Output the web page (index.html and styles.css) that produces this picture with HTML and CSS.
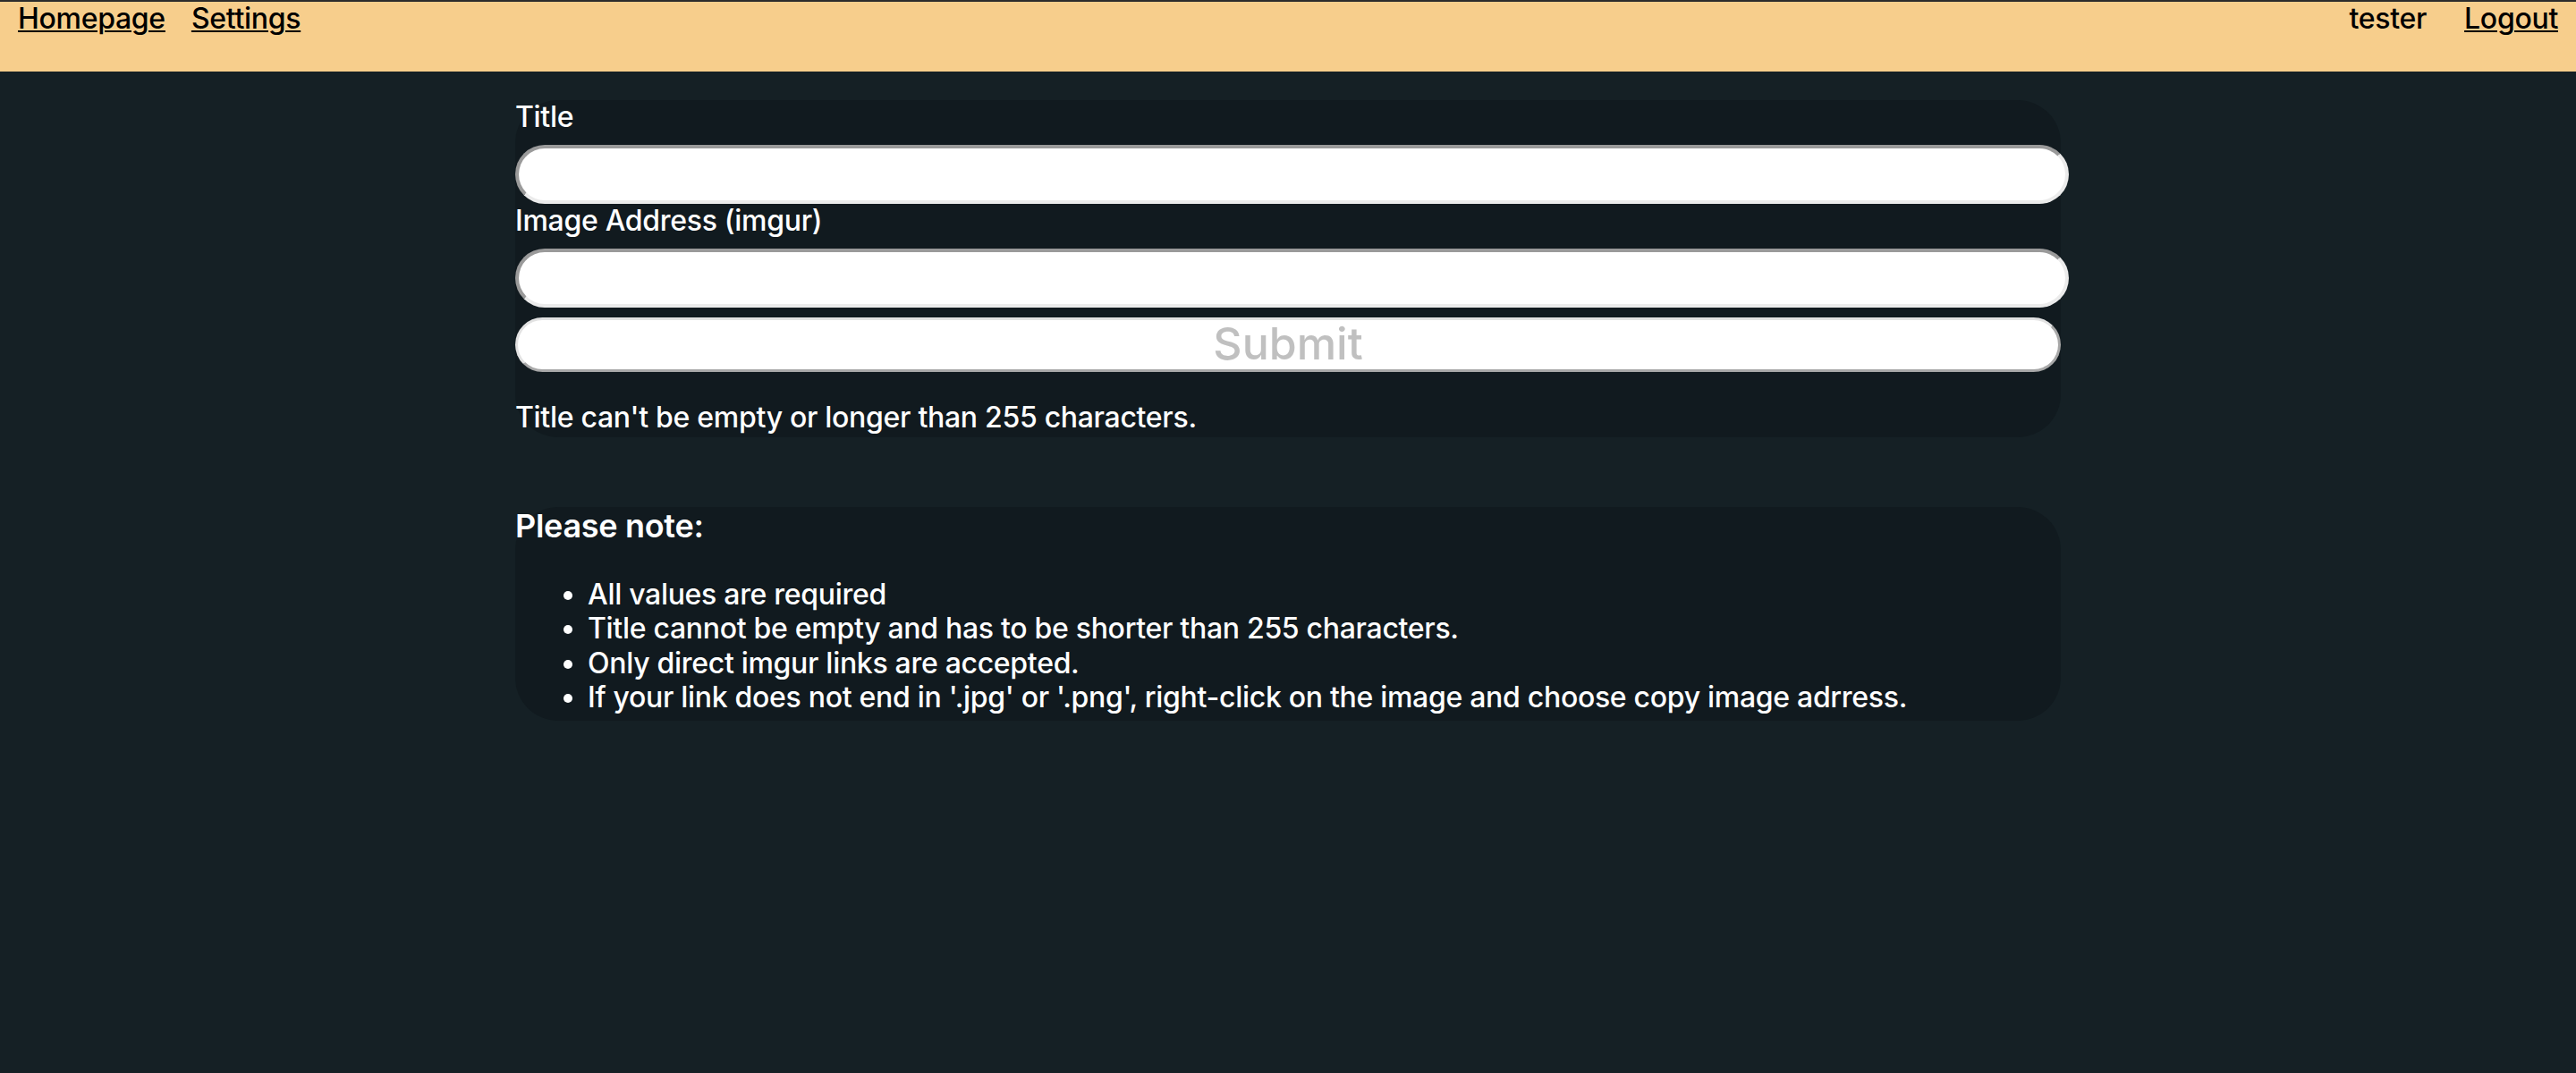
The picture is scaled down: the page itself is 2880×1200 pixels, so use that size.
FILE: index.html
```html
<!DOCTYPE html>
<html lang="en">
<head>
<meta charset="utf-8">
<title>New Post</title>
<link rel="stylesheet" href="styles.css">
</head>
<body>
<nav class="navbar">
  <div class="nav-group nav-left">
    <a class="nav-link" href="#">Homepage</a>
    <a class="nav-link" href="#">Settings</a>
  </div>
  <div class="nav-group nav-right">
    <span class="nav-user">tester</span>
    <a class="nav-link" href="#">Logout</a>
  </div>
</nav>
<main class="main">
  <form class="panel form-panel">
    <label class="field-label" for="title">Title</label>
    <input class="field-input" id="title" type="text">
    <label class="field-label" for="image">Image Address (imgur)</label>
    <input class="field-input" id="image" type="text">
    <button class="submit-btn" type="button">Submit</button>
    <p class="form-error">Title can't be empty or longer than 255 characters.</p>
  </form>
  <section class="panel note-panel">
    <h3 class="note-title">Please note:</h3>
    <ul class="note-list">
      <li>All values are required</li>
      <li>Title cannot be empty and has to be shorter than 255 characters.</li>
      <li>Only direct imgur links are accepted.</li>
      <li>If your link does not end in '.jpg' or '.png', right-click on the image and choose copy image adrress.</li>
    </ul>
  </section>
</main>
</body>
</html>
```

FILE: styles.css
```css
* {
  box-sizing: border-box;
}

html, body {
  margin: 0;
  padding: 0;
}

body {
  background: #152025;
  color: #ffffff;
  font-family: "Inter", "Liberation Sans", sans-serif;
  font-size: 32px;
  font-weight: 500;
  letter-spacing: -0.3px;
  line-height: 1.2;
  min-height: 1200px;
}

.navbar {
  display: flex;
  justify-content: space-between;
  align-items: flex-start;
  height: 80px;
  border-top: 2px solid #2c2c2c;
  background: #f7ce8c;
  padding: 0 20px;
  color: #000000;
}

.nav-group {
  display: flex;
  align-items: baseline;
}

.nav-left {
  gap: 29px;
}

.nav-right {
  gap: 42px;
}

.nav-link {
  color: #000000;
  text-decoration: underline;
  text-decoration-thickness: 2px;
  text-underline-offset: 2px;
}

.nav-user {
  color: #000000;
}

.main {
  width: 60%;
  margin: 32px auto 0;
}

.panel {
  background: #111a1f;
  border-radius: 48px;
}

.form-panel {
  padding-bottom: 3px;
}

.field-label {
  display: block;
  line-height: 38px;
  margin-bottom: 12px;
}

.field-input {
  display: block;
  width: calc(100% + 9px);
  height: 66px;
  margin: 0;
  padding: 0 28px;
  border-radius: 33px;
  border: 4px solid;
  border-color: #9a9a9a #ebebeb #ebebeb #9a9a9a;
  background: #ffffff;
  font: inherit;
  outline: none;
}

.submit-btn {
  display: block;
  width: 100%;
  height: 61px;
  margin: 11px 0 0;
  padding: 0 0 4px;
  border-radius: 31px;
  border: 3px solid;
  border-color: #e2e2e2 #a8a8a8 #a8a8a8 #e2e2e2;
  background: #ffffff;
  color: #c0c0c0;
  font-family: inherit;
  font-size: 50px;
  font-weight: 500;
  letter-spacing: 0;
  line-height: 1;
  text-align: center;
}

.form-error {
  margin: 32px 0 0;
  line-height: 38px;
}

.note-panel {
  margin-top: 81px;
  padding-bottom: 7px;
}

.note-title {
  margin: -3px 0 0;
  font-size: 36px;
  font-weight: 600;
  line-height: 1.2;
}

.note-list {
  margin: 36px 0 0;
  padding-left: 81px;
  line-height: 38.3px;
}
```
